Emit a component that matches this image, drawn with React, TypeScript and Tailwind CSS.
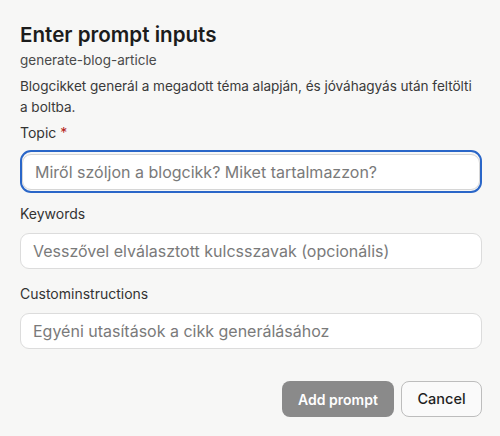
import React from "react";

export default function App() {
  return (
    <div
      className="w-[500px] h-[436px] bg-[#f7f7f6] pl-5 pr-[18px] pt-[21px] text-[#2b2b2b] overflow-hidden"
      style={{ fontFamily: "Inter, 'Noto Sans', sans-serif" }}
    >
      <h1 className="text-[20.6px] leading-[28px] font-semibold text-[#1c1c1c]">
        Enter prompt inputs
      </h1>
      <p className="mt-[1px] text-[13.5px] leading-[20px] text-[#4a4a4a]">generate-blog-article</p>
      <p className="mt-[6px] text-[13.6px] leading-[21px] tracking-[-0.05px] text-[#3a3a3a]">
        Blogcikket generál a megadott téma alapján, és jóváhagyás után feltölti a boltba.
      </p>

      <label className="mt-[5px] block text-[14px] leading-[20px] text-[#333]">
        Topic <span className="text-[#b42318]">*</span>
      </label>
      <div className="mt-[7px] rounded-[11px] border-2 border-[#2a66c8] pt-[2px] pb-[1px]">
        <input
          autoFocus
          placeholder="Miről szóljon a blogcikk? Miket tartalmazzon?"
          className="block h-[36px] w-full rounded-[9px] border border-[#d6d6d6] bg-white px-3 text-[16px] text-[#222] placeholder:text-[#7a7a7a] outline-none"
        />
      </div>

      <label className="mt-[11px] block text-[14px] leading-[20px] text-[#333]">Keywords</label>
      <input
        placeholder="Vesszővel elválasztott kulcsszavak (opcionális)"
        className="mt-[9px] block h-[36px] w-full rounded-[9px] border border-[#dcdcdc] bg-white px-3 text-[16px] text-[#222] placeholder:text-[#7a7a7a] outline-none"
      />

      <label className="mt-[15px] block text-[14px] leading-[20px] text-[#333]">Custominstructions</label>
      <input
        placeholder="Egyéni utasítások a cikk generálásához"
        className="mt-[9px] block h-[36px] w-full rounded-[9px] border border-[#dcdcdc] bg-white px-3 text-[16px] text-[#222] placeholder:text-[#7a7a7a] outline-none"
      />

      <div className="mt-[32px] flex justify-end gap-[7px]">
        <button className="h-[36px] w-[112px] rounded-[8px] bg-[#8a8a8a] text-[14px] font-semibold text-white">
          Add prompt
        </button>
        <button className="h-[36px] w-[81px] rounded-[8px] border border-[#bdbdbd] bg-[#fafafa] text-[14.5px] font-medium text-[#1f1f1f]">
          Cancel
        </button>
      </div>
    </div>
  );
}
